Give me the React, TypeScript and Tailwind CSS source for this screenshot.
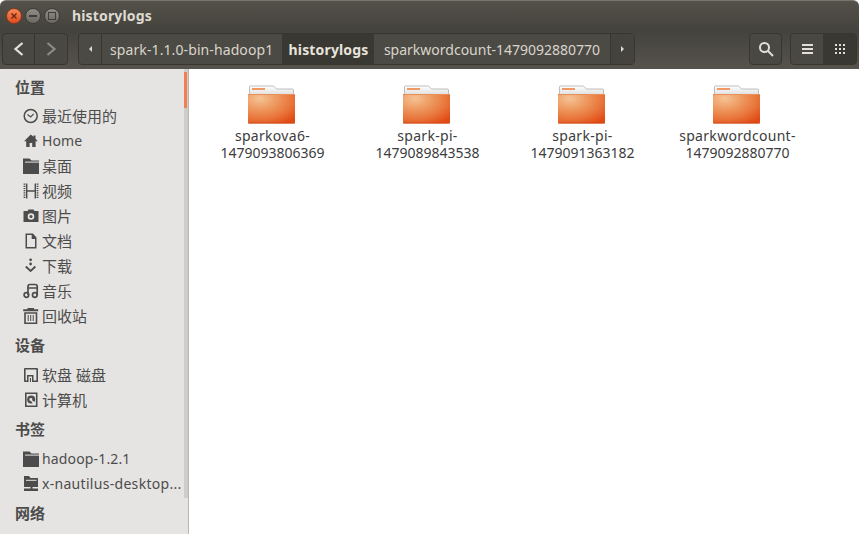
import React from "react";

const F = "font-['Noto_Sans','Noto_Sans_CJK_SC',sans-serif]";

function Ico({ children }: { children: React.ReactNode }) {
  return (
    <svg width="16" height="16" viewBox="0 0 16 16" className="shrink-0" fill="#4c4c4c">
      {children}
    </svg>
  );
}

const folderShape = (
  <>
    <path d="M0 .5h6.5L8.5 2.5H16V16H0z" />
    <path d="M2 3.600h14v1H2z" fill="#e6e4e2" />
  </>
);

const icons: Record<string, React.ReactNode> = {
  clock: (
    <>
      <circle cx="7.700" cy="8" r="6.500" fill="none" stroke="#4c4c4c" strokeWidth="1.500" />
      <path d="M4.500 6.600 7.700 9l3-3.200" fill="none" stroke="#4c4c4c" strokeWidth="1.200" />
    </>
  ),
  home: <path d="M7.800 1.500 1 8.200h2.200V14h3.400v-4h2.600v4h3.400V8.200h2.200L12.500 5.700V2.500h-2v1.200z" />,
  folder: folderShape,
  film: (
    <>
      <path d="M3 .5h1.400v15H3zM11.600 .5H13v15h-1.400zM4 7.200h8v1.500H4z" />
      <path d="M1.500 .5v15M14.500 .5v15" stroke="#4c4c4c" strokeWidth="1.800" strokeDasharray="1.200 1" fill="none" />
    </>
  ),
  camera: (
    <path
      fillRule="evenodd"
      d="M5.500 1.500h5L11.500 3H15.500v11H.5V3h4zM8 5.200a3.300 3.300 0 1 0 0 6.600 3.300 3.300 0 0 0 0-6.600zm0 1.700a1.600 1.600 0 1 1 0 3.200 1.600 1.600 0 0 1 0-3.200z"
    />
  ),
  doc: <path fillRule="evenodd" d="M2.500 .5H10l3.500 4v11h-11zM4 2v12h8V6H8.700V2z" />,
  download: (
    <>
      <circle cx="7.600" cy="1.800" r="1.400" />
      <circle cx="7.600" cy="6" r="1.400" />
      <path d="M2.800 8.500 7.600 13l4.800-4.500" fill="none" stroke="#4c4c4c" strokeWidth="1.800" />
    </>
  ),
  music: (
    <>
      <circle cx="3.400" cy="12" r="2.300" fill="none" stroke="#4c4c4c" strokeWidth="1.700" />
      <circle cx="11.800" cy="12" r="2.300" fill="none" stroke="#4c4c4c" strokeWidth="1.700" />
      <path d="M5 12V3.200C5 2 6 1.500 7 1.500h5.400c1 0 1.800.7 1.800 1.700V12M5 5h9.200" fill="none" stroke="#4c4c4c" strokeWidth="1.700" />
    </>
  ),
  trash: (
    <path
      fillRule="evenodd"
      d="M4.500 0h6.500v1.300h4.200v2H.2v-2h4.300zM1.200 4.300H14.300V16H1.200zm1.600 1.500v8.700h9.900V5.800zM4.700 7h1v6h-1zm2.500 0h1v6h-1zm2.500 0h1v6h-1z"
    />
  ),
  floppy: (
    <path
      fillRule="evenodd"
      d="M2 1h12a1 1 0 0 1 1 1v13H9V9.500h-3.500V15H2a1 1 0 0 1-1-1V2a1 1 0 0 1 1-1zM2.600 2.600V13.400h1.400V8h6.500v5.400h2.900V2.600zM6.900 11H8v4H6.900z"
    />
  ),
  disk: (
    <path
      fillRule="evenodd"
      d="M2 .5h12.500V15H2zm1.600 1.600v11.300h9.300V2.100zM8.200 3.500a4 4 0 0 1 4 4c0 1-.3 1.800-.9 2.500L9.100 8.300a1.500 1.500 0 1 0-1.100.7l1.700 2.300c-.5.2-1 .3-1.500.3a4 4 0 1 1 0-8.100z"
    />
  ),
  folderFull: folderShape,
  network: (
    <>
      <path d="M1 0h5l1.500 2H15v9H9.500v1.500H15V15H1v-2.500h6.500V11H1z" />
      <path d="M3 3.800h10.500v1H3z" fill="#e6e4e2" />
    </>
  ),
};

function Row({
  icon,
  label,
  className = "",
  textClass = "relative top-[1px] text-[15px]",
}: {
  icon: string;
  label: string;
  className?: string;
  textClass?: string;
}) {
  return (
    <div className={`flex h-[25px] items-center gap-[3px] pl-[23px] text-[#4c4c4c] ${className}`}>
      <Ico>{icons[icon]}</Ico>
      <span className={`whitespace-nowrap ${textClass}`}>{label}</span>
    </div>
  );
}

function Head({ label, className = "" }: { label: string; className?: string }) {
  return <div className={`pl-[15px] text-[15px] font-bold leading-[25px] text-[#4c4c4c] ${className}`}>{label}</div>;
}

function Folder({ id }: { id: string }) {
  return (
    <svg width="48" height="41" viewBox="0 0 48 41" className="mr-[1px]">
      <defs>
        <radialGradient id={`${id}h`} cx="0.25" cy="0.15" r="1">
          <stop offset="0" stopColor="#f5c396" />
          <stop offset="0.35" stopColor="#ee9b62" />
          <stop offset="0.7" stopColor="#e8743a" />
          <stop offset="1" stopColor="#e24a14" />
        </radialGradient>
        <linearGradient id={`${id}t`} x1="0" y1="0" x2="0" y2="1">
          <stop offset="0" stopColor="#ffffff" />
          <stop offset="1" stopColor="#dedede" />
        </linearGradient>
      </defs>
      <path d="M1.500 12V4a1 1 0 0 1 1-1h23l3 3h16a1 1 0 0 1 1 1v5z" fill={`url(#${id}t)`} stroke="#aeaeae" strokeWidth="0.8" />
      <rect x="4" y="5" width="13" height="2" fill="#ef9a66" />
      <path d="M0 11h47v28a1.500 1.500 0 0 1-1.500 1.500h-44A1.500 1.500 0 0 1 0 39z" fill={`url(#${id}h)`} />
      <path d="M0 11h47v1H0z" fill="#e98f58" />
      <path d="M0 39.500h47v1H0z" fill="#c9481a" opacity="0.8" />
    </svg>
  );
}

function Item({ id, a, b }: { id: string; a: string; b: string }) {
  return (
    <div className="flex w-[155px] shrink-0 flex-col items-center">
      <Folder id={id} />
      <div className="mt-[3px] text-center text-[14px] leading-[17px] text-[#3c3c3c]">
        <div className="tracking-[0.3px]">{a}</div>
        <div>{b}</div>
      </div>
    </div>
  );
}

function Chevron({ dir, color }: { dir: "l" | "r"; color: string }) {
  return (
    <svg width="12" height="16" viewBox="0 0 12 16" fill="none" stroke={color} strokeWidth="2.200">
      <path d={dir === "l" ? "M9.500 2 2.500 8l7 6" : "M2.500 2l7 6-7 6"} />
    </svg>
  );
}

export default function App() {
  return (
    <div className={`flex h-[534px] w-[859px] flex-col overflow-hidden bg-white ${F}`}>
      {/* Title bar */}
      <div className="flex h-[31px] shrink-0 items-center rounded-t-[6px] border-t border-[#77756e] bg-gradient-to-b from-[#53514a] to-[#44423c] pl-[6px]">
        <div className="flex h-[16px] w-[16px] items-center justify-center rounded-full border border-[#8a3a1c] bg-gradient-to-b from-[#f58a5a] to-[#e2491c]">
          <svg width="8" height="8" viewBox="0 0 8 8" stroke="#6a2410" strokeWidth="1.400">
            <path d="M1.500 1.500l5 5M6.500 1.500l-5 5" />
          </svg>
        </div>
        <div className="ml-[3px] flex h-[16px] w-[16px] items-center justify-center rounded-full border border-[#3e3c37] bg-gradient-to-b from-[#8f8d85] to-[#6a6861]">
          <div className="h-[2px] w-[8px] bg-[#3f3d38]" />
        </div>
        <div className="ml-[3px] flex h-[16px] w-[16px] items-center justify-center rounded-full border border-[#3e3c37] bg-gradient-to-b from-[#8f8d85] to-[#6a6861]">
          <div className="h-[8px] w-[8px] border border-[#3f3d38]" />
        </div>
        <div className="ml-[12px] -mt-[1px] text-[14px] font-bold tracking-[0.15px] text-[#dfdbd2]">historylogs</div>
      </div>

      {/* Toolbar */}
      <div className="flex h-[38px] shrink-0 items-center bg-gradient-to-b from-[#45433d] to-[#55534c] px-[2px] pb-[4px] pt-[2px]">
        <div className="flex h-[32px] w-[66px] rounded-[4px] border border-[#38362f] bg-[#4a4842]">
          <div className="flex w-[32px] items-center justify-center border-r border-[#38362f]">
            <Chevron dir="l" color="#e6e3dc" />
          </div>
          <div className="flex flex-1 items-center justify-center">
            <Chevron dir="r" color="#8d8b84" />
          </div>
        </div>

        <div className="ml-[10px] flex h-[32px] items-stretch rounded-[4px] border border-[#38362f] bg-[#4c4a44] text-[14px] text-[#d9d5cc]">
          <div className="flex w-[23px] items-center justify-center border-r border-[#38362f]">
            <div className="h-0 w-0 border-y-[3px] border-r-[3px] border-y-transparent border-r-[#dfdbd2]" />
          </div>
          <div className="flex w-[180px] items-center justify-start whitespace-nowrap pl-[8px] tracking-[0.1px]">spark-1.1.0-bin-hadoop1</div>
          <div className="flex w-[92px] items-center justify-center bg-[#3a3833] pl-[1px] font-bold tracking-[0.15px] text-[#e8e4dc]">historylogs</div>
          <div className="flex w-[236px] items-center justify-center whitespace-nowrap">sparkwordcount-1479092880770</div>
          <div className="flex w-[24px] items-center justify-center border-l border-[#38362f] bg-[#45433d]">
            <div className="h-0 w-0 border-y-[3px] border-l-[3px] border-y-transparent border-l-[#dfdbd2]" />
          </div>
        </div>

        <div className="flex-1" />

        <div className="flex h-[32px] w-[33px] items-center justify-center rounded-[4px] border border-[#38362f] bg-[#4a4842]">
          <svg width="16" height="16" viewBox="0 0 16 16" fill="none" stroke="#e2dfd8" strokeWidth="2">
            <circle cx="6.500" cy="6.500" r="4.500" />
            <path d="M10 10l5 5" />
          </svg>
        </div>
        <div className="ml-[8px] flex h-[32px] w-[67px] rounded-[4px] border border-[#38362f] bg-[#4a4842]">
          <div className="flex w-[32px] items-center justify-center">
            <div className="flex w-[11px] flex-col gap-[2px]">
              <div className="h-[2px] bg-[#e2dfd8]" />
              <div className="h-[2px] bg-[#e2dfd8]" />
              <div className="h-[2px] bg-[#e2dfd8]" />
            </div>
          </div>
          <div className="flex flex-1 items-center justify-center rounded-r-[3px] bg-[#3a3833]">
            <div className="grid grid-cols-3 gap-[2px]">
              {Array.from({ length: 9 }).map((_, i) => (
                <div key={i} className="h-[2px] w-[2px] bg-[#e2dfd8]" />
              ))}
            </div>
          </div>
        </div>
      </div>

      {/* Body */}
      <div className="flex min-h-0 flex-1">
        <div className="relative w-[189px] shrink-0 overflow-hidden border-r border-[#b8b6b2] bg-[#e6e4e2] pt-[6px]">
          <Head label="位置" />
          <Row icon="clock" label="最近使用的" className="mt-[3px]" />
          <Row icon="home" label="Home" textClass="text-[14px] tracking-[0.1px]" />
          <Row icon="folder" label="桌面" />
          <Row icon="film" label="视频" />
          <Row icon="camera" label="图片" />
          <Row icon="doc" label="文档" />
          <Row icon="download" label="下载" />
          <Row icon="music" label="音乐" />
          <Row icon="trash" label="回收站" />
          <Head label="设备" className="mt-[5px]" />
          <Row icon="floppy" label="软盘 磁盘" className="mt-[4px]" />
          <Row icon="disk" label="计算机" />
          <Head label="书签" className="mt-[5px]" />
          <Row icon="folderFull" label="hadoop-1.2.1" className="mt-[4px]" textClass="text-[14px] tracking-[0.15px]" />
          <Row icon="network" label="x-nautilus-desktop..." textClass="text-[14px] tracking-[0.3px]" />
          <Head label="网络" className="mt-[5px]" />
          <div className="absolute right-0 top-0 h-[429px] w-[4px] bg-[#cfcdca]">
            <div className="absolute right-[1px] top-[3px] h-[36px] w-[3px] bg-[#f08050]" />
          </div>
        </div>
        <div className="flex min-w-0 flex-1 items-start bg-white pl-[6px] pt-[14px]">
          <Item id="a" a="sparkova6-" b="1479093806369" />
          <Item id="b" a="spark-pi-" b="1479089843538" />
          <Item id="c" a="spark-pi-" b="1479091363182" />
          <Item id="d" a="sparkwordcount-" b="1479092880770" />
        </div>
      </div>
    </div>
  );
}
